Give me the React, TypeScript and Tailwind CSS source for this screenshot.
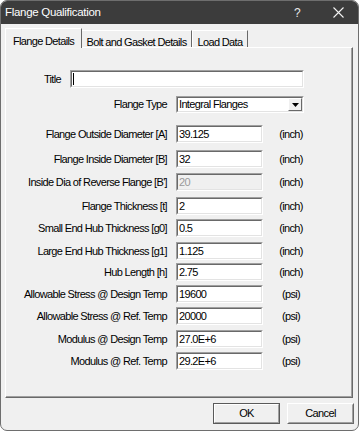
import React from 'react';

interface Field {
  label: string;
  value: string;
  unit: string;
  mt: string;
  disabled?: boolean;
}

const fields: Field[] = [
  { label: 'Flange Outside Diameter [A]', value: '39.125', unit: '(inch)', mt: 'mt-[12px]' },
  { label: 'Flange Inside Diameter [B]', value: '32', unit: '(inch)', mt: 'mt-[7px]' },
  { label: "Inside Dia of Reverse Flange [B']", value: '20', unit: '(inch)', mt: 'mt-[5px]', disabled: true },
  { label: 'Flange Thickness [t]', value: '2', unit: '(inch)', mt: 'mt-[6px]' },
  { label: 'Small End Hub Thickness [g0]', value: '0.5', unit: '(inch)', mt: 'mt-[4px]' },
  { label: 'Large End Hub Thickness [g1]', value: '1.125', unit: '(inch)', mt: 'mt-[5px]' },
  { label: 'Hub Length [h]', value: '2.75', unit: '(inch)', mt: 'mt-[3px]' },
  { label: 'Allowable Stress @ Design Temp', value: '19600', unit: '(psi)', mt: 'mt-[4px]' },
  { label: 'Allowable Stress @ Ref. Temp', value: '20000', unit: '(psi)', mt: 'mt-[4px]' },
  { label: 'Modulus @ Design Temp', value: '27.0E+6', unit: '(psi)', mt: 'mt-[5px]' },
  { label: 'Modulus @ Ref. Temp', value: '29.2E+6', unit: '(psi)', mt: 'mt-[4px]' }
];

// sunken 3D edit box
const Sunken: React.FC<{ className?: string; bg?: string; children?: React.ReactNode }> = ({
  className = '',
  bg = 'bg-white',
  children
}) => (
  <div className={`border border-t-[#a0a0a0] border-l-[#a0a0a0] border-r-white border-b-white ${className}`}>
    <div className={`h-full border border-t-[#696969] border-l-[#696969] border-r-[#e3e3e3] border-b-[#e3e3e3] ${bg} flex items-center`}>
      {children}
    </div>
  </div>
);

const Button: React.FC<{ label: string; isDefault?: boolean }> = ({ label, isDefault }) => (
  <div className={`w-[67px] h-[21px] border ${isDefault ? 'border-[#5a5a5a]' : 'border-t-white border-l-white border-r-[#696969] border-b-[#696969]'}`}>
    <div className={`h-full border ${isDefault ? 'border-t-white border-l-white border-r-[#a0a0a0] border-b-[#a0a0a0]' : 'border-t-[#f0f0f0] border-l-[#f0f0f0] border-r-[#a0a0a0] border-b-[#a0a0a0]'} bg-[#f0f0f0] flex items-center justify-center text-black`}>
      {label}
    </div>
  </div>
);

export default function App() {
  return (
    <div className="w-[359px] h-[431px] bg-white font-['Liberation_Sans',Arial,sans-serif] text-[11px] tracking-[-0.65px] text-black">
      <div className="h-full flex flex-col bg-[#f0f0f0] border border-[#6e6e6e] rounded-[7px] overflow-hidden">
        {/* title bar */}
        <div className="h-[23px] shrink-0 bg-[#3c3c3c] flex items-center pl-[4px] text-white">
          <span className="text-[11.5px] tracking-[-0.3px] leading-none">Flange Qualification</span>
          <span className="ml-auto mr-[33px] text-[12px] leading-none text-[#e8e8e8]">?</span>
          <svg width="11" height="11" viewBox="0 0 11 11" className="mr-[14px]">
            <path d="M0.5 0.5 L10.5 10.5 M10.5 0.5 L0.5 10.5" stroke="#f2f2f2" strokeWidth="1.1" />
          </svg>
        </div>

        {/* tabs */}
        <div className="h-[23px] shrink-0 flex items-end pl-[4px]">
          <div className="relative z-10 -mb-px w-[77px] h-[20px] bg-[#f0f0f0] border-t border-l border-t-white border-l-white border-r border-r-[#696969] flex justify-center pt-[4px]">
            Flange Details
          </div>
          <div className="w-[110px] h-[17px] border-t border-t-white border-r border-r-[#696969] flex justify-center pt-[3px]">
            Bolt and Gasket Details
          </div>
          <div className="w-[56px] h-[17px] border-t border-l border-t-white border-l-white border-r border-r-[#696969] flex justify-center pt-[3px]">
            Load Data
          </div>
        </div>

        {/* panel */}
        <div className="ml-[4px] mr-[5px] h-[351px] shrink-0 border border-t-white border-l-white border-r-[#696969] border-b-[#696969]">
          <div className="h-full border-r border-b border-r-[#a0a0a0] border-b-[#a0a0a0] pt-[22px]">
            <div className="flex items-center gap-[9px]">
              <div className="w-[55px] text-right">Title</div>
              <Sunken className="w-[234px] h-[18px]">
                <div className="ml-[1px] w-px h-[12px] bg-black" />
              </Sunken>
            </div>

            <div className="flex items-center gap-[9px] mt-[8px]">
              <div className="w-[161px] text-right">Flange Type</div>
              <Sunken className="w-[128px] h-[17px]">
                <span className="pl-[1px] flex-1">Integral Flanges</span>
                <div className="w-[14px] h-full border border-t-white border-l-white border-r-[#696969] border-b-[#696969] bg-[#f0f0f0] flex items-center justify-center">
                  <svg width="7" height="4" viewBox="0 0 7 4">
                    <path d="M0 0 H7 L3.5 4 Z" fill="#000" />
                  </svg>
                </div>
              </Sunken>
            </div>

            {fields.map((f) => (
              <div key={f.label} className={`flex items-center ${f.mt}`}>
                <div className="w-[161px] text-right">{f.label}</div>
                <Sunken className="ml-[9px] w-[87px] h-[18px]" bg={f.disabled ? 'bg-[#f0f0f0]' : 'bg-white'}>
                  <span className={`pl-[1px] ${f.disabled ? 'text-[#9a9a9a]' : ''}`}>{f.value}</span>
                </Sunken>
                <div className="ml-[8px] w-[40px] text-center">{f.unit}</div>
              </div>
            ))}
          </div>
        </div>

        {/* buttons */}
        <div className="flex justify-end gap-[7px] mt-[5px] mr-[4px]">
          <Button label="OK" isDefault />
          <Button label="Cancel" />
        </div>
      </div>
    </div>
  );
}
